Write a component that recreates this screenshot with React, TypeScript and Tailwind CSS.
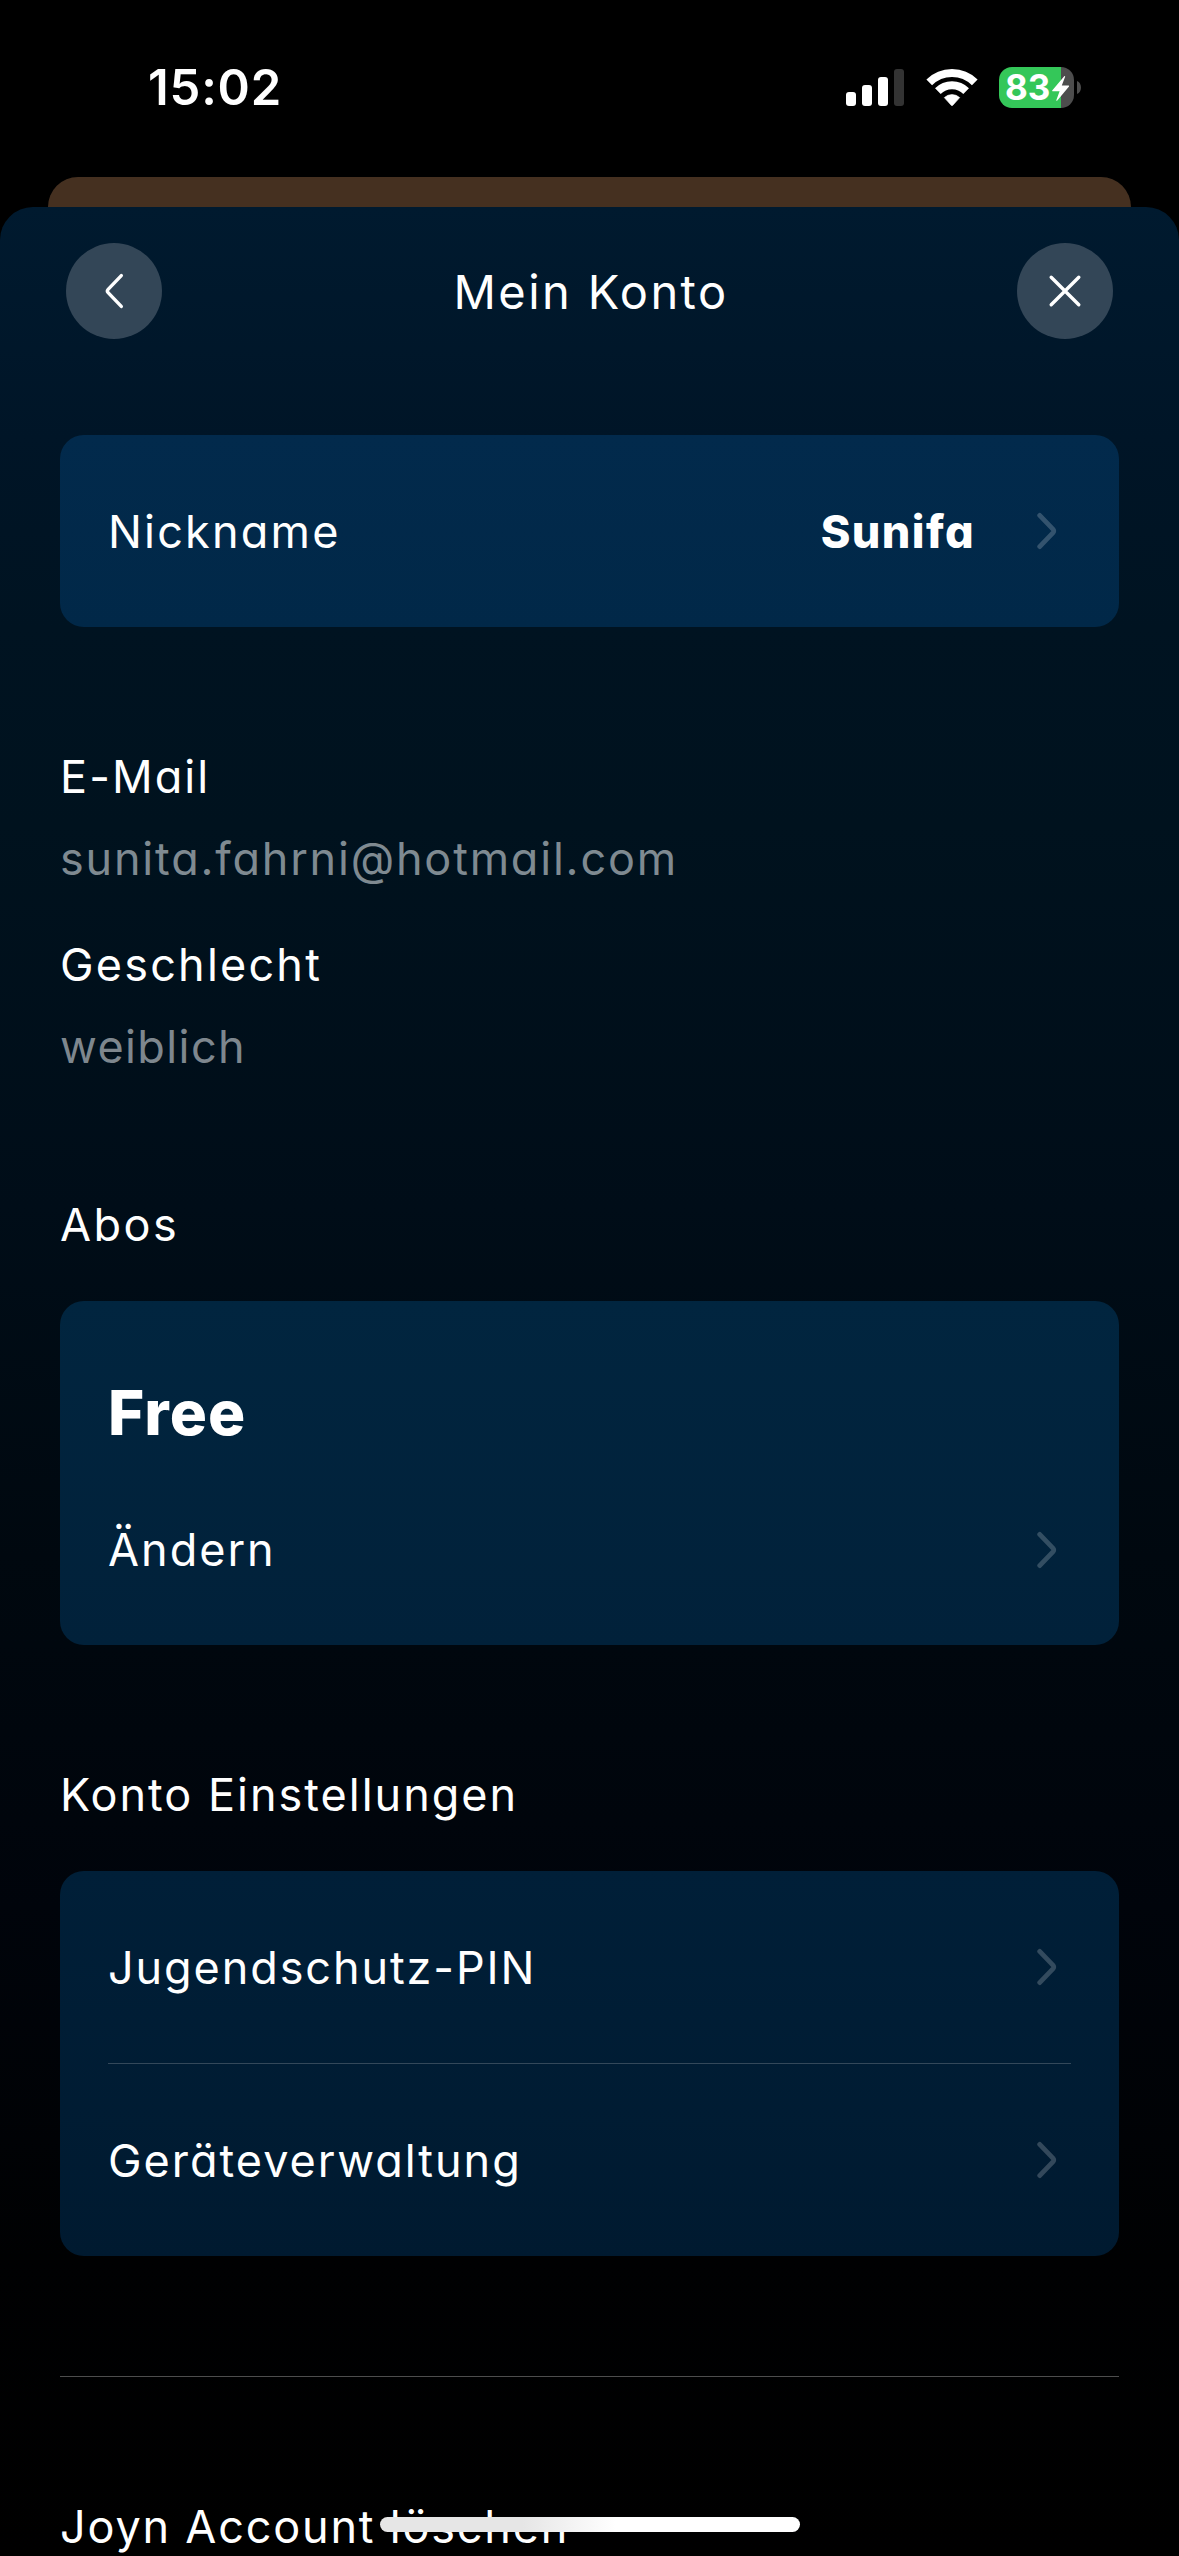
import React from "react";

const Chevron = () => (
  <svg width="20" height="38" viewBox="0 0 20 38" fill="none" className="shrink-0">
    <path
      d="M2.7 3.4 L15.9 17.2 Q17.5 19 15.9 20.8 L2.7 34.6"
      stroke="#fff"
      strokeOpacity="0.2"
      strokeWidth="4.8"
      strokeLinecap="round"
      strokeLinejoin="round"
    />
  </svg>
);

const Row = ({
  label,
  tracking,
  children,
}: {
  label: string;
  tracking: string;
  children?: React.ReactNode;
}) => (
  <div className="flex h-48 items-center justify-between pr-[14px]">
    <span className={`pt-[2px] ${tracking}`}>{label}</span>
    <div className="flex items-center">
      {children}
      <Chevron />
    </div>
  </div>
);

const StatusBar = () => (
  <div className="flex h-[177px] shrink-0 items-start justify-between pl-[148px] pr-[98px]">
    <div className="mt-[58px] text-[49px] font-semibold leading-[60px] tracking-[0.8px]">15:02</div>

    <div className="mt-[67px] flex">
      {/* Signal */}
      <div className="mt-[2px] flex h-[37px] items-end gap-[6px]">
        <div className="h-[14px] w-[10px] rounded-[3px] bg-white" />
        <div className="h-[21px] w-[10px] rounded-[3px] bg-white" />
        <div className="h-[29px] w-[10px] rounded-[3px] bg-white" />
        <div className="h-[37px] w-[10px] rounded-[3px] bg-[#333333]" />
      </div>

      {/* Wifi */}
      <svg width="52" height="41" viewBox="0 0 52 41" fill="none" className="ml-[22px]">
        <path d="M3.23 15.43 A32.2 32.2 0 0 1 48.77 15.43" stroke="#fff" strokeWidth="8" />
        <path d="M11.86 24.06 A20 20 0 0 1 40.14 24.06" stroke="#fff" strokeWidth="8" />
        <path
          d="M18.3 30.6 A11.2 11.2 0 0 1 33.7 30.6 L26.8 38.3 Q26 39.1 25.2 38.3 Z"
          fill="#fff"
          stroke="#fff"
          strokeWidth="0.6"
          strokeLinejoin="round"
        />
      </svg>

      {/* Battery */}
      <div className="ml-[21px] flex items-center">
        <div className="relative flex h-[41px] w-[75px] items-center overflow-hidden rounded-[13px] bg-[linear-gradient(90deg,#34c759_62px,#4d4d4d_62px)]">
          <span className="ml-[6px] text-[35px] font-bold leading-[41px]">83</span>
          <svg width="20" height="28" viewBox="0 0 20 28" className="absolute left-[52px] top-[8px]">
            <path
              d="M13.2 1.2 L1.2 15.4 Q0.8 16.2 1.6 16.2 H8.6 L5.2 25.4 Q5.6 26.2 6.3 25.5 L18 11.4 Q18.4 10.6 17.6 10.6 H10.8 L14.2 1.6 Q14 0.6 13.2 1.2 Z"
              fill="#fff"
            />
          </svg>
        </div>
        <svg width="4" height="13" viewBox="0 0 4 13" className="ml-[3px]">
          <path d="M0 0 C5.3 2 5.3 11 0 13 Z" fill="#4d4d4d" />
        </svg>
      </div>
    </div>
  </div>
);

const Header = () => (
  <div className="mt-9 flex h-24 items-center justify-between px-[66px]">
    <button className="flex h-24 w-24 items-center justify-center rounded-full bg-[#334657]">
      <svg width="20" height="38" viewBox="0 0 20 38" fill="none">
        <path
          d="M17.3 3.6 L4.1 17.4 Q2.6 19 4.1 20.6 L17.3 34.4"
          stroke="#fff"
          strokeWidth="3.4"
          strokeLinecap="round"
          strokeLinejoin="round"
        />
      </svg>
    </button>
    <h1 className="pl-[3px] pt-[2px] text-[47px] leading-[60px] tracking-[2.4px]">Mein Konto</h1>
    <button className="flex h-24 w-24 items-center justify-center rounded-full bg-[#334657]">
      <svg width="34" height="34" viewBox="0 0 34 34" fill="none">
        <path d="M3.2 3.2 L30.8 30.8 M30.8 3.2 L3.2 30.8" stroke="#fff" strokeWidth="3.4" strokeLinecap="round" />
      </svg>
    </button>
  </div>
);

export default function App() {
  return (
    <div className="relative flex h-[2556px] w-[1179px] flex-col overflow-hidden bg-black font-['Inter',sans-serif] text-white [font-feature-settings:'cv11']">
      <StatusBar />

      {/* Sheet below the active one */}
      <div className="mx-12 h-[30px] shrink-0 rounded-t-[30px] bg-[#453020]" />

      <div className="flex flex-1 flex-col rounded-t-[33px] bg-[linear-gradient(180deg,#001a2f_0px,#001527_230px,#001321_420px,#00121e_620px,#000d18_1000px,#00080f_1350px,#00040b_1700px,#000102_2050px,#000000_2349px)]">
        <Header />

        <main className="mt-24 px-[60px] text-[45px] leading-[60px]">
          <div className="rounded-[24px] bg-[linear-gradient(180deg,#022a4c,#012848)] px-12">
            <Row label="Nickname" tracking="tracking-[2.2px]">
              <span className="mr-[62px] pt-[2px] font-extrabold tracking-[1.4px]">Sunifa</span>
            </Row>
          </div>

          {/* Personal data */}
          <dl className="mt-[120px]">
            <dt className="tracking-[2.1px]">E-Mail</dt>
            <dd className="mt-[22px] tracking-[1.8px] text-[#7f8a91]">sunita.fahrni@hotmail.com</dd>
            <dt className="mt-[46px] tracking-[2.2px]">Geschlecht</dt>
            <dd className="mt-[22px] tracking-[1.4px] text-[#7e878e]">weiblich</dd>
          </dl>

          {/* Subscriptions */}
          <h2 className="mt-[118px] tracking-[2.5px]">Abos</h2>
          <div className="mt-[46px] h-[344px] rounded-[24px] bg-[linear-gradient(180deg,#01253f,#01213a)] px-12 pt-[74px]">
            <div className="text-[62px] font-extrabold leading-[76px] tracking-[1px]">Free</div>
            <div className="mt-[68px] flex items-center justify-between pr-[14px]">
              <span className="pt-px tracking-[2px]">Ändern</span>
              <Chevron />
            </div>
          </div>

          {/* Account settings */}
          <h2 className="mt-[120px] tracking-[2px]">Konto Einstellungen</h2>
          <div className="mt-[46px] rounded-[24px] bg-[linear-gradient(180deg,#001f38,#001a30)] px-12">
            <Row label="Jugendschutz-PIN" tracking="tracking-[1.9px]" />
            <div className="h-px bg-[#33485a]" />
            <Row label="Geräteverwaltung" tracking="tracking-[2px]" />
          </div>

          <div className="mt-[120px] h-px bg-[#4d4d4d]" />
          <div className="mt-[120px] whitespace-nowrap tracking-[1.8px]">Joyn Account löschen</div>
        </main>
      </div>

      {/* Home indicator */}
      <div className="absolute left-[380px] top-[2517px] h-[15px] w-[420px] rounded-full bg-[linear-gradient(90deg,#e6e6e6_0%,#e6e6e6_34%,#ffffff_56%)]" />
    </div>
  );
}
